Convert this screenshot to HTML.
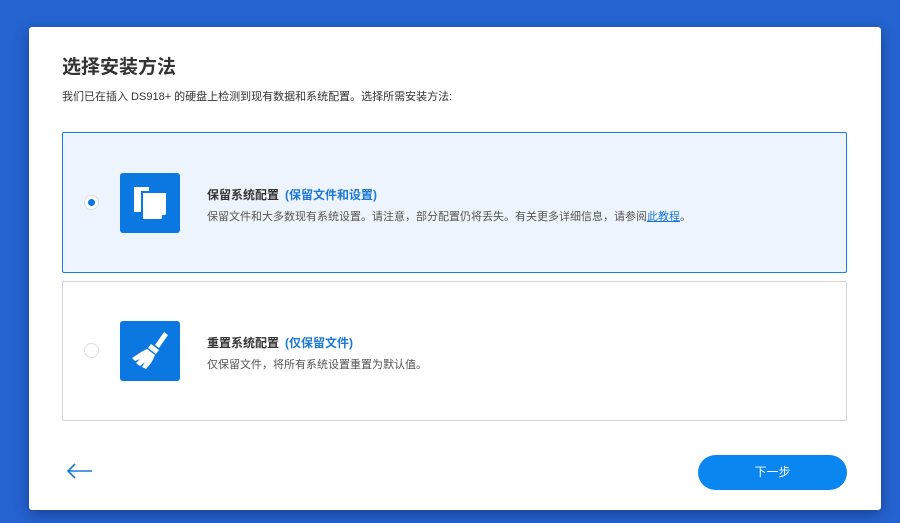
<!DOCTYPE html>
<html><head><meta charset="utf-8"><style>
*{margin:0;padding:0;box-sizing:border-box}
body{width:900px;height:523px;background:#2563d0;font-family:"Liberation Sans","Noto Sans CJK SC",sans-serif;position:relative;overflow:hidden}
.card{position:absolute;left:29px;top:27px;width:852px;height:483px;background:#fff;border-radius:3px;box-shadow:0 4px 14px rgba(0,0,40,.35)}
.t{position:absolute;left:62px;top:52px;font-size:19px;font-weight:bold;color:#333}
.s{position:absolute;left:62px;top:88px;font-size:11px;color:#333}
.opt{position:absolute;left:62px;width:785px;border-radius:2px}
.o1{top:132px;height:141px;background:#eef4fd;border:1.5px solid #1a7fe0}
.o2{top:281px;height:140px;background:#fff;border:1.5px solid #cfd3d8}
.radio{position:absolute;left:84px;width:15px;height:15px;border-radius:50%;border:1px solid #ddd;background:#fff}
.radio.on::after{content:"";position:absolute;left:3px;top:3px;width:7px;height:7px;border-radius:50%;background:#0a78e0}
.ic{position:absolute;left:120px;width:60px;height:60px;background:#0a78e0;border-radius:3px}
.h{position:absolute;left:207px;font-size:12px;font-weight:bold;color:#333}
.h span{color:#1a78d8;margin-left:6px}
.d{position:absolute;left:207px;font-size:11px;color:#555}
.d a{color:#1a78d8;text-decoration:underline}
.btn{position:absolute;left:698px;top:455px;width:149px;height:35px;border-radius:18px;background:#0a86f0;color:#fff;font-size:12px;text-align:center;line-height:35px}
</style></head><body>
<div class="card"></div>
<div class="t">选择安装方法</div>
<div class="s">我们已在插入 DS918+ 的硬盘上检测到现有数据和系统配置。选择所需安装方法:</div>
<div class="opt o1"></div>
<div class="opt o2"></div>
<div class="radio on" style="top:195px"></div>
<div class="radio" style="top:343px"></div>
<div class="ic" style="top:173px"><svg width="60" height="60"><rect x="14" y="14" width="15" height="25" fill="#fff"/><rect x="21" y="18" width="27" height="30" fill="#0a78e0"/><path d="M23 20h23v21l-5 5h-18z" fill="#fff"/><path d="M46 42l-4 0 0 4z" fill="#0a78e0"/></svg></div>
<div class="ic" style="top:321px"><svg width="60" height="60"><path d="M44 11l4 3-9 13-4-3z" fill="#fff"/><path d="M31 23l8 6-3 4-8-6z" fill="#fff"/><path d="M27 28l8 6c-2 6-6 11-9 14l-4-2 3-5-5 4-4-3 4-4-5 2-3-3c5-3 10-7 15-9z" fill="#fff"/></svg></div>
<div class="h" style="top:186px">保留系统配置<span>(保留文件和设置)</span></div>
<div class="d" style="top:208px">保留文件和大多数现有系统设置。请注意，部分配置仍将丢失。有关更多详细信息，请参阅<a>此教程</a>。</div>
<div class="h" style="top:334px">重置系统配置<span>(仅保留文件)</span></div>
<div class="d" style="top:356px">仅保留文件，将所有系统设置重置为默认值。</div>
<svg style="position:absolute;left:66px;top:462px" width="28" height="18"><path d="M2 9h24M9 2L2 9l7 7" stroke="#1a78d8" stroke-width="1.6" fill="none"/></svg>
<div class="btn">下一步</div>
</body></html>
